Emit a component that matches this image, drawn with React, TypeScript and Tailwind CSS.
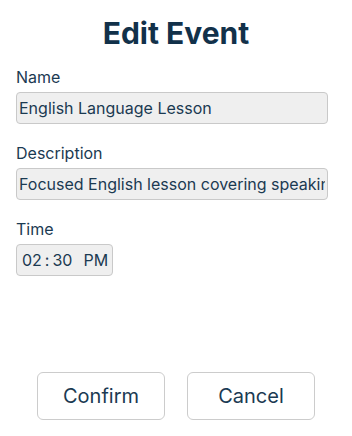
const fieldClass =
  "block w-[312px] h-8 px-[2px] text-base text-[#1b3a52] bg-[#efefef] border border-[#c9c9c9] rounded outline-none";

export default function App() {
  return (
    <div className="h-screen flex flex-col bg-white px-4 pb-4 font-['Inter','Noto_Sans',sans-serif] text-[#1b3a52]">
      <h1 className="pt-[15px] text-3xl font-bold text-center text-[#12314a]">Edit Event</h1>

      <label className="block mt-[14px] text-base leading-6">Name</label>
      <input readOnly className={`mt-[3px] ${fieldClass}`} value="English Language Lesson" />

      <label className="block mt-[17px] text-base leading-6">Description</label>
      <input
        readOnly
        className={`mt-[3px] ${fieldClass}`}
        value="Focused English lesson covering speaking, listening and grammar practice."
      />

      <label className="block mt-[17px] text-base leading-6">Time</label>
      <div className="mt-[3px] w-[97px] h-8 flex items-center pl-[5px] text-base bg-[#efefef] border border-[#c9c9c9] rounded">
        <span>02</span>
        <span className="mx-[3px]">:</span>
        <span>30</span>
        <span className="ml-[11px]">PM</span>
      </div>

      <div className="mt-auto flex justify-center gap-[22px]">
        <button className="w-32 h-12 text-xl bg-white border border-[#cccccc] rounded-md text-[#1b3a52]">
          Confirm
        </button>
        <button className="w-32 h-12 text-xl bg-white border border-[#cccccc] rounded-md text-[#1b3a52]">
          Cancel
        </button>
      </div>
    </div>
  );
}
